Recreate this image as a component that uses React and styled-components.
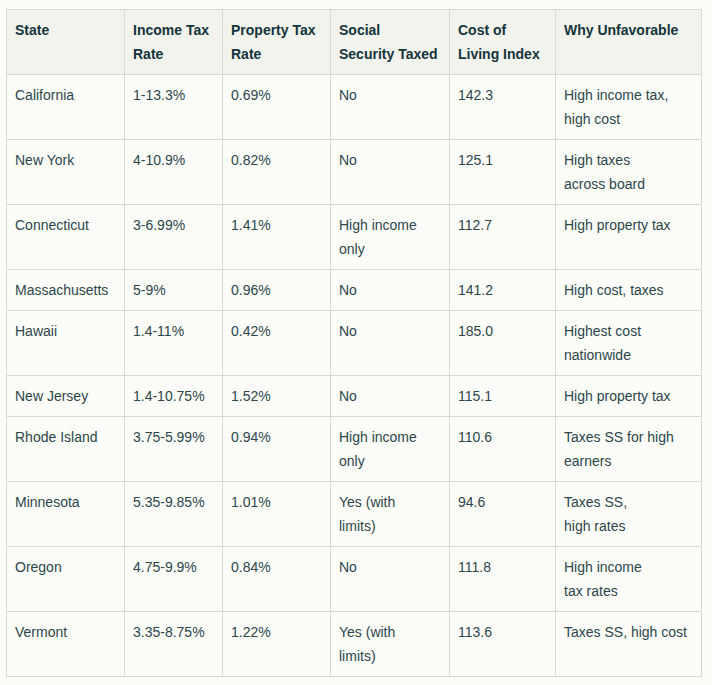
import React from 'react';
import styled, { createGlobalStyle } from 'styled-components';

const GlobalStyle = createGlobalStyle`
  body {
    margin: 0;
    background: #fcfcf9;
    font-family: "Liberation Sans", Arial, sans-serif;
  }
`;

const Page = styled.div`
  padding: 9px 11px 9px 6px;
`;

const Table = styled.table`
  width: 695px;
  border-collapse: collapse;
  table-layout: fixed;
  font-size: 14px;
  line-height: 24px;
`;

const Th = styled.th`
  box-sizing: border-box;
  width: ${p => p.$w}px;
  background: #f3f3ee;
  border: 1px solid #dadad5;
  padding: 8px 8px;
  text-align: left;
  vertical-align: top;
  font-weight: 600;
  color: #13343b;
  white-space: pre-line;
`;

const Td = styled.td`
  box-sizing: border-box;
  background: #fcfcf9;
  border: 1px solid #dadad5;
  padding: 8px 8px;
  vertical-align: top;
  color: #2c464b;
  white-space: pre-line;
`;

const columns = [
  { label: 'State', w: 118 },
  { label: 'Income Tax\nRate', w: 98 },
  { label: 'Property Tax\nRate', w: 108 },
  { label: 'Social\nSecurity Taxed', w: 119 },
  { label: 'Cost of\nLiving Index', w: 106 },
  { label: 'Why Unfavorable', w: 146 },
];

const rows = [
  ['California', '1-13.3%', '0.69%', 'No', '142.3', 'High income tax,\nhigh cost'],
  ['New York', '4-10.9%', '0.82%', 'No', '125.1', 'High taxes\nacross board'],
  ['Connecticut', '3-6.99%', '1.41%', 'High income\nonly', '112.7', 'High property tax'],
  ['Massachusetts', '5-9%', '0.96%', 'No', '141.2', 'High cost, taxes'],
  ['Hawaii', '1.4-11%', '0.42%', 'No', '185.0', 'Highest cost\nnationwide'],
  ['New Jersey', '1.4-10.75%', '1.52%', 'No', '115.1', 'High property tax'],
  ['Rhode Island', '3.75-5.99%', '0.94%', 'High income\nonly', '110.6', 'Taxes SS for high\nearners'],
  ['Minnesota', '5.35-9.85%', '1.01%', 'Yes (with\nlimits)', '94.6', 'Taxes SS,\nhigh rates'],
  ['Oregon', '4.75-9.9%', '0.84%', 'No', '111.8', 'High income\ntax rates'],
  ['Vermont', '3.35-8.75%', '1.22%', 'Yes (with\nlimits)', '113.6', 'Taxes SS, high cost'],
];

export default function App() {
  return (
    <Page>
      <GlobalStyle />
      <Table>
        <thead>
          <tr>
            {columns.map(c => (
              <Th key={c.label} $w={c.w}>{c.label}</Th>
            ))}
          </tr>
        </thead>
        <tbody>
          {rows.map(r => (
            <tr key={r[0]}>
              {r.map((cell, i) => (
                <Td key={i}>{cell}</Td>
              ))}
            </tr>
          ))}
        </tbody>
      </Table>
    </Page>
  );
}
